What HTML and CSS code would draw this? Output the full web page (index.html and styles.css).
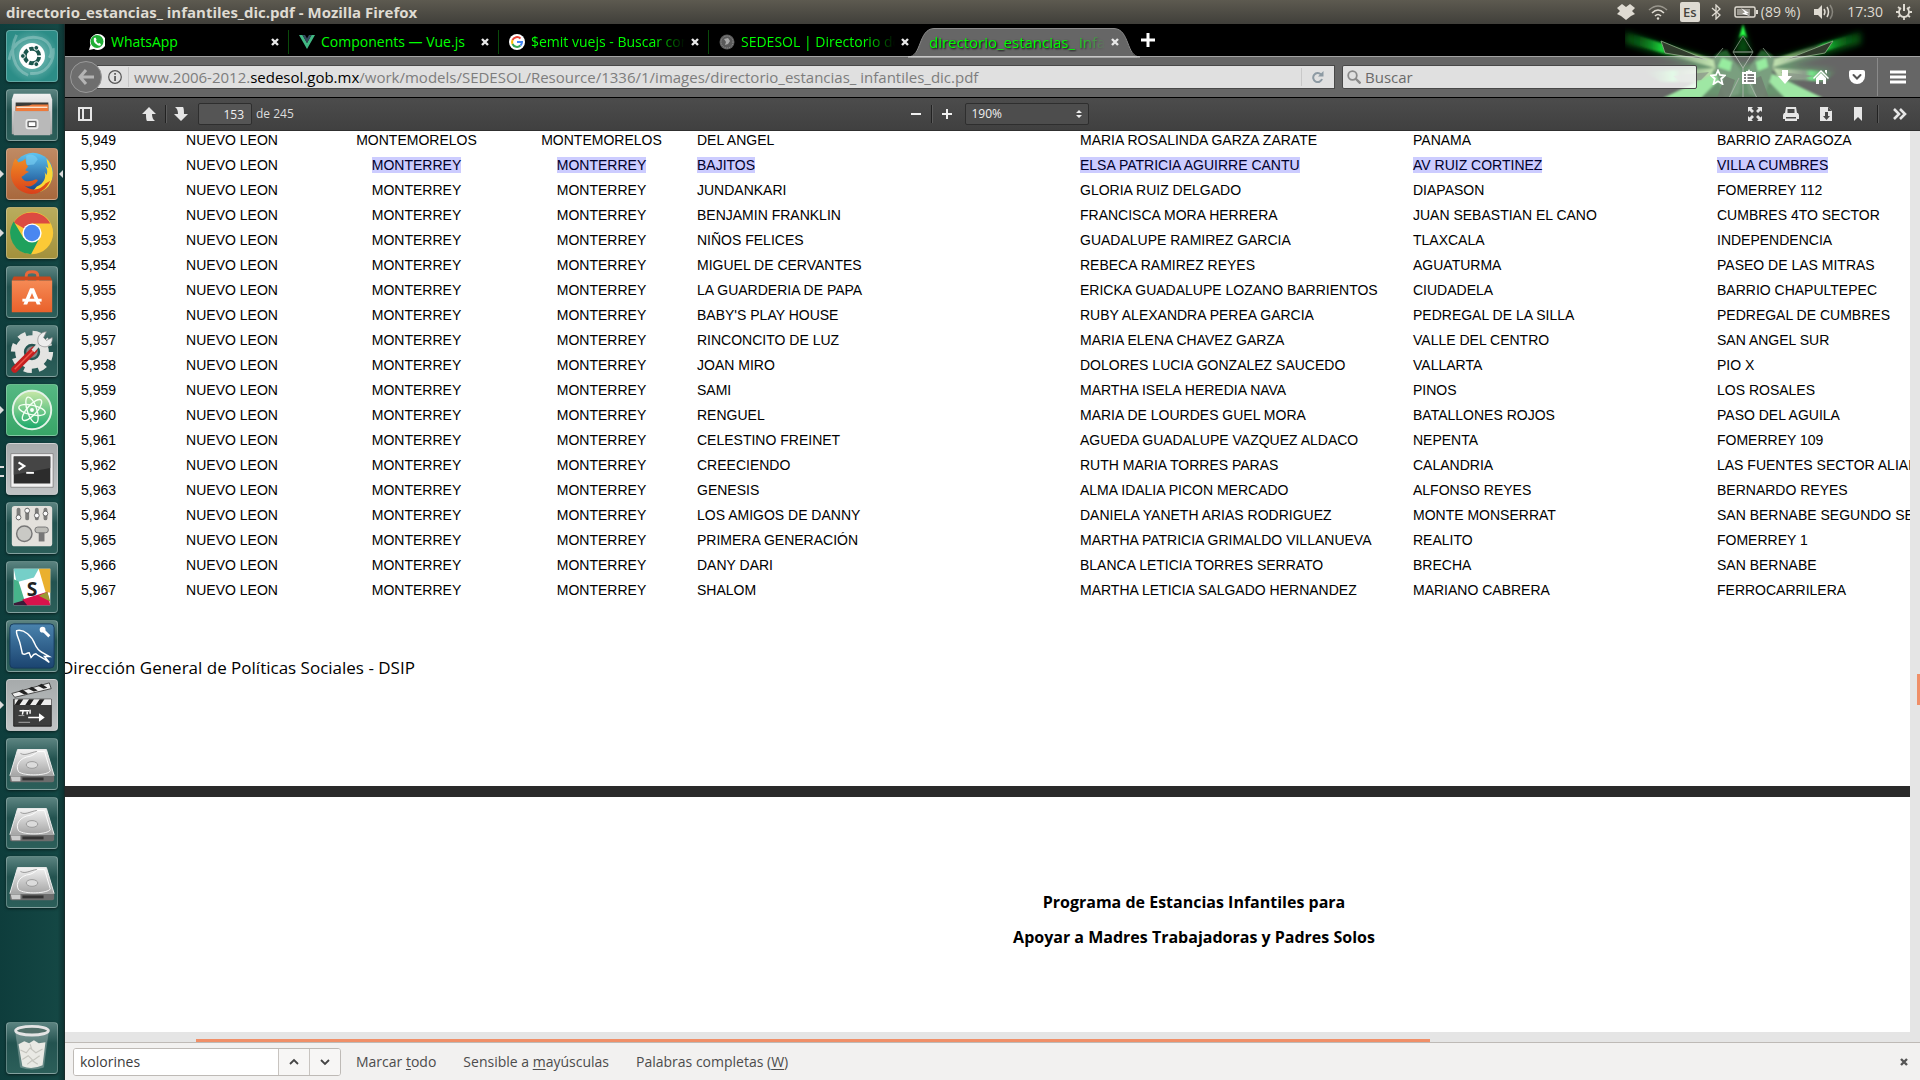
FILE: index.html
```html
<!DOCTYPE html>
<html lang="es">
<head>
<meta charset="utf-8">
<title>directorio_estancias_ infantiles_dic.pdf - Mozilla Firefox</title>
<link rel="stylesheet" href="styles.css">
</head>
<body>
<svg width="0" height="0" class="defs" aria-hidden="true">
  <defs>
    <linearGradient id="metal" x1="0" y1="0" x2="0" y2="1"><stop offset="0" stop-color="#f2f2f2"/><stop offset="1" stop-color="#a5a5a5"/></linearGradient>
    <linearGradient id="orange" x1="0" y1="0" x2="0" y2="1"><stop offset="0" stop-color="#f58a55"/><stop offset="1" stop-color="#e9612b"/></linearGradient>
    <linearGradient id="blue" x1="0" y1="0" x2="0" y2="1"><stop offset="0" stop-color="#5fc4f0"/><stop offset="1" stop-color="#123f86"/></linearGradient>
    <linearGradient id="fox" x1="0" y1="0" x2="0" y2="1"><stop offset="0" stop-color="#f08a24"/><stop offset="1" stop-color="#d9401a"/></linearGradient>
    <linearGradient id="sea" x1="0" y1="0" x2="0" y2="1"><stop offset="0" stop-color="#4a83ad"/><stop offset="1" stop-color="#1b4470"/></linearGradient>
    <linearGradient id="atomg" x1="0" y1="0" x2="0" y2="1"><stop offset="0" stop-color="#c9e8a8"/><stop offset="1" stop-color="#18a86a"/></linearGradient>
    <symbol id="drive" viewBox="0 0 52 52">
      <path d="M11 11h30l8 27H3z" fill="url(#metal)" stroke="#eee"/>
      <path d="M3 38h46v5q0 2-2 2H5q-2 0-2-2z" fill="#6d6d6d"/><path d="M4 39h10v5H5z" fill="#ccc"/><path d="M16 40h22v3H16z" fill="#333"/>
      <path d="M12 34c-4-7 2-15 12-16 4-1 6-4 8-5h7l6 20c-2 5-27 6-33 1z" fill="none" stroke="#fff" stroke-width="1" opacity=".9"/>
      <path d="M14 15c5 3 10-1 17-2" fill="none" stroke="#999"/>
      <ellipse cx="26" cy="27" rx="6" ry="3.500" fill="#dcdcdc" stroke="#999"/>
    </symbol>
    <symbol id="close" viewBox="0 0 10 10"><path d="M2 2l6 6M8 2l-6 6" stroke="currentColor" stroke-width="2.400"/></symbol>
  </defs>
</svg>

<header class="panel">
  <h1 class="panel-title">directorio_estancias_ infantiles_dic.pdf - Mozilla Firefox</h1>
  <div class="indicators">
    <svg width="18" height="18" viewBox="0 0 18 18"><path d="M5 1l4 3 4-3 5 4-3 3 3 3-4 2-5 4-5-4-4-2 3-3-3-3z" fill="#dfdbd2"/></svg>
    <svg class="wifi" width="20" height="18" viewBox="0 0 20 18" fill="none" stroke="#dfdbd2" stroke-width="1.600"><path d="M1 7q9-8 18 0" opacity=".5"/><path d="M4 10q6-6 12 0M7 13q3-3 6 0"/><circle cx="10" cy="15.500" r="1.200" fill="#dfdbd2" stroke="none"/></svg>
    <span class="kbd">Es</span>
    <svg class="bt" width="10" height="16" viewBox="0 0 10 16"><path d="M1 4l8 7-4 4V1l4 4-8 7" fill="none" stroke="#dfdbd2" stroke-width="1.300"/></svg>
    <svg class="bat" width="24" height="14" viewBox="0 0 24 14"><rect x="1" y="2" width="20" height="10" rx="1.500" fill="none" stroke="#dfdbd2" stroke-width="1.500"/><path d="M3 4h13v6H3z" fill="#99968e"/><path d="M22 5h2v4h-2z" fill="#dfdbd2"/><path d="M7 3l8 5-3 .5 5 3-9-3 3-1z" fill="#fff"/></svg>
    <span class="bat-text">(89 %)</span>
    <svg class="vol" width="20" height="16" viewBox="0 0 20 16"><path d="M0 5h4l4-4v14l-4-4H0z" fill="#dfdbd2"/><g fill="none" stroke="#dfdbd2" stroke-width="1.500"><path d="M10 5q2 3 0 6M13 3q3 5 0 10"/><path d="M16 1q5 7 0 14" opacity=".4"/></g></svg>
    <time class="clock">17:30</time>
    <svg width="16" height="16" viewBox="0 0 16 16" fill="none" stroke="#dfdbd2"><path d="M5 4a5 5 0 1 0 6 0" stroke-width="1.800"/><path d="M8 0v7" stroke-width="2"/><path d="M8 13v3M0 8h3M13 8h3M2 13l2-1.500M14 13l-2-1.500M2 3l2 1.500M14 3l-2 1.500" stroke-width="1.800"/></svg>
  </div>
</header>

<div class="desktop">
<nav class="launcher" aria-label="Lanzador">
  <a href="#" class="tile dash" aria-label="Inicio"><svg viewBox="0 0 52 52"><path d="M2 30C6 8 24 4 36 8c10 4 12 14 8 20M48 18c2 14-8 28-24 26M10 4C2 20 6 40 22 46" fill="none" stroke="#fff" stroke-width="3" opacity=".25"/><circle cx="26" cy="26" r="13.500" fill="#fff"/><circle cx="26" cy="26" r="7.500" fill="none" stroke="#1b554c" stroke-width="4" stroke-dasharray="13.700 2" stroke-dashoffset="-1"/><g fill="#1b554c" stroke="#fff"><circle cx="16.500" cy="26" r="2.500"/><circle cx="30.500" cy="17.500" r="2.500"/><circle cx="30.500" cy="34.500" r="2.500"/></g></svg></a>
  <a href="#" class="tile" aria-label="Archivos"><svg viewBox="0 0 52 52"><path d="M7 4h38l2 6v36H5V10z" fill="url(#metal)"/><path d="M9 13h34v9H9z" fill="#3a3a38"/><path d="M9 17l14-1 3-1h17v7H9z" fill="#ee7a3b"/><path d="M10 18h32" stroke="#fbe3cd" stroke-width="1.500"/><path d="M7 22h38v25H7z" fill="#b9b9b9"/><rect x="20" y="31" width="12" height="9" rx="2" fill="#c9c9c9" stroke="#eee" stroke-width="1.500"/><path d="M22 33h8v5h-8z" fill="#fff" stroke="#444"/></svg></a>
  <a href="#" class="tile firefox run focus" aria-label="Firefox"><svg viewBox="0 0 52 52"><circle cx="27" cy="25" r="21" fill="url(#blue)"/><path d="M20 7c6-3 10 0 12 4l-4 5-8 1z" fill="#7cd0f4" opacity=".6"/><path d="M41 10c8 8 9 21 2 29-6 6-12 7-18 7l6-7c8-3 10-10 8-15l2 3c2-4 0-7-1-9l3 2z" fill="#fbd735"/><path d="M6 17c0-3 2-6 3-7l3 4c2-1 5-1 7-4 1 3 0 6 3 8l-3 4 4 2c-4 1-4 3-8 5 2 5 7 5 11 4 4-1 5-2 6 0-4 6-10 7-14 5 8 7 18 4 22-2l5-3C40 44 30 49 20 46 6 42 1 28 6 17z" fill="url(#fox)"/></svg></a>
  <a href="#" class="tile chrome run" aria-label="Chrome"><svg viewBox="0 0 52 52"><circle cx="26" cy="26" r="22" fill="#fcc936"/><path d="M26 26L7 15A22 22 0 0 1 45 16H26z" fill="#dc4b41"/><path d="M26 26l8 5-9 17A22 22 0 0 1 7 14l10 17z" fill="#1fa15d"/><circle cx="26" cy="26" r="10" fill="#fff"/><circle cx="26" cy="26" r="8.500" fill="#4a87f0"/></svg></a>
  <a href="#" class="tile" aria-label="Software"><svg viewBox="0 0 52 52"><path d="M20 17V9q0-4 6-4t6 4v8" fill="none" stroke="#e8683a" stroke-width="3"/><path d="M7 10h38l2 4H5z" fill="#c9481d"/><path d="M5 14h42v33H5z" fill="url(#orange)"/><path d="M17 39l7-17h4l7 17h-4l-5-12-5 12z" fill="#fff"/><path d="M16 33h20v3H16z" fill="#fff"/></svg></a>
  <a href="#" class="tile" aria-label="Configuración"><svg viewBox="0 0 52 52"><circle cx="26" cy="27" r="19" fill="none" stroke="#e4e4e2" stroke-width="6" stroke-dasharray="8 6.920"/><circle cx="26" cy="27" r="13" fill="none" stroke="#e4e4e2" stroke-width="9"/><circle cx="26" cy="27" r="6" fill="#888"/><path d="M8 45l20-20" stroke="#c42020" stroke-width="7" stroke-linecap="round"/><path d="M8 45l20-20" stroke="#ee5a4d" stroke-width="1.500"/><path d="M27 26l7-8" stroke="#ddd" stroke-width="4"/><path d="M33 19c-3-6 1-13 8-13l-3 6 3 3 6-3c1 8-7 13-14 7z" fill="#ededed" stroke="#888" stroke-width=".7"/></svg></a>
  <a href="#" class="tile atom run" aria-label="Atom"><svg viewBox="0 0 52 52"><circle cx="26" cy="26" r="20" fill="url(#atomg)" stroke="#e4f3e8" stroke-width="2"/><g fill="none" stroke="#f4fff4" stroke-width="1.400"><ellipse cx="26" cy="26" rx="14" ry="5" transform="rotate(12 26 26)"/><ellipse cx="26" cy="26" rx="14" ry="5" transform="rotate(72 26 26)"/><ellipse cx="26" cy="26" rx="14" ry="5" transform="rotate(132 26 26)"/></g><circle cx="26" cy="26" r="2" fill="#fff"/></svg></a>
  <a href="#" class="tile term run two" aria-label="Terminal"><svg viewBox="0 0 52 52"><path d="M4 10h44v35H4z" fill="#f1f1f1" stroke="#888"/><path d="M7 13h38v28H7z" fill="#2c2c2c"/><path d="M7 13h38v12L7 32z" fill="#454545"/><path d="M12 19l6 4-6 4" fill="none" stroke="#fff" stroke-width="2.200"/><path d="M20 30h8" stroke="#fff" stroke-width="2"/></svg></a>
  <a href="#" class="tile" aria-label="Ajustes"><svg viewBox="0 0 52 52"><rect x="5" y="3" width="42" height="42" rx="3" fill="#e3e1dc"/><g stroke="#7c7c7a" stroke-width="4" stroke-linecap="round"><path d="M12 7v9M21 7v9M31 7v9M40 7v9"/></g><g fill="#fafafa" stroke="#555" stroke-width=".8"><circle cx="12" cy="15" r="2.500"/><circle cx="21" cy="8" r="2.500"/><circle cx="31" cy="13" r="2.500"/><circle cx="40" cy="11" r="2.500"/></g><circle cx="18" cy="32" r="8" fill="#c9c9c5" stroke="#777" stroke-width="1.500"/><path d="M33 30h6v10h-6z" fill="#777"/><rect x="29" y="25" width="14" height="6" rx="3" fill="#bdbdb8" stroke="#777"/></svg></a>
  <a href="#" class="tile" aria-label="Slack"><svg viewBox="0 0 52 52"><path d="M7 7h38v38H7z" fill="#fff"/><path d="M7 7h26l-5 9-18 5z" fill="#75cfc8"/><path d="M7 18l5 2 7 22-12 3z" fill="#47b48b"/><path d="M33 7h12v25l-5-1z" fill="#eab02e"/><path d="M16 39l26-8 3 14H18z" fill="#d8134c"/><path d="M33 35l9-4 3 10z" fill="#9c9a32"/><path d="M7 43l10-3 4 5H7z" fill="#3d1a39"/><text x="26" y="35" text-anchor="middle" class="slack-s">S</text></svg></a>
  <a href="#" class="tile" aria-label="MySQL Workbench"><svg viewBox="0 0 52 52"><rect x="3" y="3" width="46" height="46" rx="4" fill="url(#sea)" stroke="#173a5c"/><path d="M10 10c8-2 16 6 19 14 2 5 4 7 8 9l7 4-5 0 5 6c-6-5-11-6-14-9-3 0-4 3-5 4l-2-5c-3 0-4 3-7 1l-2-9c-1-6-5-11-4-15z" fill="none" stroke="#fff" stroke-width="1.500"/><path d="M36 8l8 8" stroke="#fff" stroke-width="3"/><circle cx="37" cy="9" r="3" fill="#fff"/></svg></a>
  <a href="#" class="tile film run" aria-label="Editor de vídeo"><svg viewBox="0 0 52 52"><path d="M7 20h39v28H7z" fill="#3c3d3d" stroke="#222"/><path d="M5 14L44 3l2 6L8 18z" fill="#eee" stroke="#444"/><path d="M12 12l6 3 4-1-6-4zM22 9l6 3 4-1-6-4zM32 6l6 3 4-1-6-4z" fill="#222"/><path d="M8 20h38v6H8z" fill="#eee"/><path d="M12 20h5l-4 6H8zM23 20h5l-4 6h-5zM34 20h5l-4 6h-5z" fill="#222"/><path d="M13 32h10M17 31l-1 5M21 33v3M24 31v4M22 39h12M34 36l4 3-4 3z" stroke="#fff" stroke-width="1.500" fill="#fff"/><path d="M12 44h12M12 37h6" stroke="#aaa"/></svg></a>
  <a href="#" class="tile" aria-label="Disco 1"><svg><use href="#drive"/></svg></a>
  <a href="#" class="tile" aria-label="Disco 2"><svg><use href="#drive"/></svg></a>
  <a href="#" class="tile" aria-label="Disco 3"><svg><use href="#drive"/></svg></a>
  <a href="#" class="tile trash" aria-label="Papelera"><svg viewBox="0 0 52 52"><path d="M9 9l5 37q12 4 24 0l5-37z" fill="#cfd9d6" opacity=".35" stroke="#fff" stroke-width=".5"/><path d="M12 22l6-3 5 2 5-3 5 3 7-1-3 24q-11 5-21 1z" fill="#e9e9e4"/><path d="M14 28l6 3 4-5 6 5 7-4M16 38l6-4 5 5 7-5M24 22l2 6M21 43l5-4 6 4" fill="none" stroke="#c5c5be" stroke-width="1.200"/><ellipse cx="26" cy="8" rx="17" ry="4.500" fill="#52706a" stroke="#e4e4e4" stroke-width="3"/></svg></a>
</nav>

<main class="browser">
<div class="chrome-top">
  <svg class="persona" viewBox="0 0 250 74" aria-hidden="true">
    <defs>
      <filter id="soft"><feGaussianBlur stdDeviation="3"/></filter>
      <filter id="soft1"><feGaussianBlur stdDeviation="1"/></filter>
      <linearGradient id="wl" x1="0" x2="1"><stop offset="0" stop-color="#0a4d10" stop-opacity="0"/><stop offset=".4" stop-color="#1bd83c"/><stop offset=".5" stop-color="#2b5a2b"/><stop offset="1" stop-color="#9fd880"/></linearGradient>
      <linearGradient id="wr" x1="1" x2="0"><stop offset="0" stop-color="#0a4d10" stop-opacity="0"/><stop offset=".4" stop-color="#1bd83c"/><stop offset=".5" stop-color="#3e5a3e"/><stop offset="1" stop-color="#9fd880"/></linearGradient>
    </defs>
    <g filter="url(#soft)" fill="#0f9c22" opacity=".5"><path d="M0 8l90 28-10 8L0 20zM236 8l-90 28 10 8 80-24zM60 74l40-34h40l45 34zM20 46l80-6v20zM212 46l-70-6v20zM118 0l-8 30h16z"/></g>
    <g filter="url(#soft1)">
      <path d="M2 8l88 28v8L6 20z" fill="url(#wl)"/><path d="M234 8l-88 28v8l84-26z" fill="url(#wr)"/>
      <path d="M20 48l70-4-8 14-46 0z" fill="url(#wl)"/><path d="M212 48l-64-4 6 10 46 4z" fill="url(#wr)"/>
      <path d="M38 74l50-24 8 4-20 20zM198 74l-50-24-8 4 20 20z" fill="#5fd868"/>
      <path d="M118 0l4 14-4-3-4 3z" fill="#2cff48"/>
      <path d="M88 34q6-8 14-8l16 24-4 20-14 4-8-20zM150 34q-8-8-14-8l-16 24 4 20 14 4 8-20z" fill="#245f2c"/>
      <path d="M97 34l10 4-2 9-12-4zM141 34l-10 4 2 9 10-4z" fill="#52e060"/>
    </g>
    <path d="M92 74l8-22 10 4-6 18zM144 74l-8-22-10 4 6 18z" fill="#10240f" opacity=".8"/>
    <path d="M118 12l10 16h-20zM108 28l10 16 10-16zM118 44v30M104 74l10-20M132 74l-10-20M90 34l8-10M146 34l-8-10" fill="none" stroke="#6f7f6f" stroke-width="1"/>
    <path d="M36 17l46 19-42-7zM208 17l-48 19 40-7z" fill="#303c2c" stroke="#8fae88" stroke-width=".8"/>
    <path d="M48 52l36-4-8 8-20 2zM190 52l-34-4 8 8z" fill="#3c503a" opacity=".7"/>
  </svg>

  <div class="tabs" role="tablist">
    <div class="tab"><svg width="16" height="18" viewBox="0 0 16 18"><path d="M0 17l1.500-5A8 8 0 1 1 5 16z" fill="#fff"/><circle cx="8" cy="8.500" r="6.500" fill="#1fae35"/><path d="M5 5q-1 4 2 6 3 3 5 1l-1-2-2 .5L7 8l.5-1.500-1-2z" fill="#fff"/></svg><button class="tab-title">WhatsApp</button><button class="x" aria-label="Cerrar"><svg><use href="#close"/></svg></button></div>
    <div class="tab"><svg width="16" height="16" viewBox="0 0 16 16"><path d="M0 1h3.500L8 9l4.500-8H16L8 15z" fill="#41b883"/><path d="M3.500 1H6l2 3.500L10 1h2.500L8 9z" fill="#35495e"/></svg><button class="tab-title">Components — Vue.js</button><button class="x" aria-label="Cerrar"><svg><use href="#close"/></svg></button></div>
    <div class="tab"><svg width="16" height="16" viewBox="0 0 16 16"><circle cx="8" cy="8" r="8" fill="#fff"/><g fill="none" stroke-width="2"><path d="M11.500 4.500A5 5 0 0 0 3.500 6" stroke="#ea4335"/><path d="M3.500 6a5 5 0 0 0 0 4" stroke="#fbbc05"/><path d="M3.500 10a5 5 0 0 0 8 1.500" stroke="#34a853"/><path d="M11.500 11.500Q13 10 13 8H8" stroke="#4285f4"/></g></svg><button class="tab-title fade">$emit vuejs - Buscar con Google</button><button class="x" aria-label="Cerrar"><svg><use href="#close"/></svg></button></div>
    <div class="tab"><svg width="16" height="16" viewBox="0 0 16 16"><circle cx="8" cy="8" r="7.500" fill="#5a5a5a"/><circle cx="8" cy="8" r="6" fill="none" stroke="#999" stroke-dasharray="1 1"/><path d="M5 5l4-1 2 3-2 3-3 1 1-3z" fill="#a8a8a8"/></svg><button class="tab-title fade">SEDESOL | Directorio de Estancias</button><button class="x" aria-label="Cerrar"><svg><use href="#close"/></svg></button></div>
    <div class="tab active"><svg class="tab-shape" width="232" height="30" viewBox="0 0 232 30"><path d="M0 29.500C14 29.500 10 1 26 .5h180c16 .5 12 29 26 29V30H0z" fill="#666"/><path d="M0 29C14 29 10 1 26 .5h180c16 .5 12 28.500 26 28.500" fill="none" stroke="#8c8c8c"/></svg><button class="tab-title fade">directorio_estancias_ infantiles_dic.pdf</button><button class="x" aria-label="Cerrar"><svg><use href="#close"/></svg></button></div>
    <button class="new-tab" aria-label="Nueva pestaña"><svg width="14" height="14" viewBox="0 0 14 14"><path d="M7 0v14M0 7h14" stroke="#fff" stroke-width="3"/></svg></button>
  </div>

  <div class="navbar">
    <button class="back" aria-label="Atrás"><svg width="16" height="16" viewBox="0 0 16 16"><path d="M8 1L2 8l6 7M2 8h14" fill="none" stroke="#b4b4b4" stroke-width="3"/></svg></button>
    <div class="urlbar">
      <svg class="info" width="14" height="14" viewBox="0 0 14 14"><circle cx="7" cy="7" r="6.300" fill="none" stroke="#555" stroke-width="1.200"/><path d="M6.200 3h1.700v1.700H6.200zM6.200 6h1.700v5H6.200z" fill="#555"/></svg>
      <div class="url" role="textbox" aria-label="Dirección">www.2006-2012.<b>sedesol.gob.mx</b>/work/models/SEDESOL/Resource/1336/1/images/directorio_estancias_ infantiles_dic.pdf</div>
      <button class="reload" aria-label="Recargar"><svg width="12" height="12" viewBox="0 0 12 12"><path d="M9 3.500A4.500 4.500 0 1 0 10 8" fill="none" stroke="#8d9aa3" stroke-width="2"/><path d="M11.500 0v5.500H6z" fill="#8d9aa3"/></svg></button>
    </div>
    <label class="search"><svg width="14" height="14" viewBox="0 0 14 14" fill="none" stroke="#8a8a8a"><circle cx="5.500" cy="5.500" r="4.300" stroke-width="1.800"/><path d="M8.500 8.500l5 5" stroke-width="2.400"/></svg><input type="text" placeholder="Buscar" aria-label="Buscar"></label>
    <div class="actions">
      <button aria-label="Marcador"><svg width="16" height="16" viewBox="0 0 16 16"><path d="M8 1.500l2 4.500 5 .5-3.800 3.200L12.500 15 8 12.200 3.500 15l1.300-5.300L1 6.500 6 6z" fill="none" stroke="#fff" stroke-width="1.800"/></svg></button>
      <button aria-label="Marcadores"><svg width="16" height="16" viewBox="0 0 16 16"><path d="M5 2h2l1-2 1 2h2v1h4v12H1V3h4z" fill="#fff"/><path d="M3 6h2M6.500 6H13M3 9h2M6.500 9H13M3 12h2M6.500 12H13" stroke="#555" stroke-width="1.400"/></svg></button>
      <button aria-label="Descargas"><svg width="16" height="16" viewBox="0 0 16 16"><path d="M5 1h6v6h4l-7 8-7-8h4z" fill="#fff"/></svg></button>
      <button aria-label="Inicio"><svg width="16" height="16" viewBox="0 0 16 16"><path d="M0 9l8-8 8 8-1 1-7-7-7 7zM12 1h2v4l-2-2z" fill="#fff"/><path d="M3 9l5-5 5 5v6H10v-4H6v4H3z" fill="#fff"/></svg></button>
      <button aria-label="Pocket"><svg width="16" height="16" viewBox="0 0 16 16"><path d="M0 3q0-2 2-2h12q2 0 2 2v4a8 8 0 0 1-16 0z" fill="#fff"/><path d="M4.500 6L8 9.500 11.500 6" fill="none" stroke="#555" stroke-width="2" stroke-linecap="round"/></svg></button>
      <span class="nav-sep"></span>
      <button aria-label="Menú"><svg width="16" height="16" viewBox="0 0 16 16"><path d="M0 3h16M0 8h16M0 13h16" stroke="#fff" stroke-width="3"/></svg></button>
    </div>
  </div>
</div>

<div class="pdfbar">
  <div class="group left">
    <button class="side" aria-label="Panel lateral"><svg width="14" height="14" viewBox="0 0 14 14"><path d="M1 1h12v12H1zM5 1v12" fill="none" stroke="#e6e6e6" stroke-width="2"/></svg></button>
    <button aria-label="Página anterior"><svg width="16" height="16" viewBox="0 0 16 16"><path d="M7 1l7 7h-4q0 5 3 7H5q-1-1-1-7H0z" fill="#e6e6e6"/></svg></button>
    <span class="sep"></span>
    <button aria-label="Página siguiente"><svg width="16" height="16" viewBox="0 0 16 16"><path d="M8 15L1 8h4q0-5-3-7h8q1 1 1 7h4z" fill="#e6e6e6"/></svg></button>
    <input class="page-no" type="text" value="153" aria-label="Página"><span>de 245</span>
  </div>
  <div class="group mid">
    <button aria-label="Reducir"><svg width="12" height="12" viewBox="0 0 12 12"><path d="M1 6h10" stroke="#f0f0f0" stroke-width="2"/></svg></button>
    <span class="sep"></span>
    <button aria-label="Aumentar"><svg width="12" height="12" viewBox="0 0 12 12"><path d="M1 6h10M6 1v10" stroke="#f0f0f0" stroke-width="2"/></svg></button>
    <span class="zoom"><select aria-label="Zoom"><option>190%</option></select><svg width="6" height="8" viewBox="0 0 6 8"><path d="M3 0l3 3H0zM3 8l3-3H0z" fill="#eee"/></svg></span>
  </div>
  <div class="group right">
    <button aria-label="Presentación"><svg width="16" height="16" viewBox="0 0 16 16" fill="#e6e6e6"><path d="M1 1h5L4.500 2.500 7 5 5 7 2.500 4.500 1 6zM15 1v5l-1.500-1.500L11 7 9 5l2.500-2.500L10 1zM1 15v-5l1.500 1.500L5 9l2 2-2.500 2.500L6 15zM15 15h-5l1.500-1.500L9 11l2-2 2.500 2.500L15 10z"/></svg></button>
    <button aria-label="Imprimir"><svg width="16" height="16" viewBox="0 0 16 16"><path d="M3 1h10l1 6h1l1 2v4h-2v2H2v-2H0V9l1-2h1z" fill="#e6e6e6"/><path d="M4.500 3h7v4h-7zM3 11h10v1.500H3z" fill="#484848"/></svg></button>
    <button aria-label="Descargar"><svg width="14" height="16" viewBox="0 0 14 16"><path d="M1 1h8l4 4v10H1z" fill="#e6e6e6"/><path d="M9 1v4h4M6 6h3v4h2l-3.500 4L4 10h2z" fill="#484848"/></svg></button>
    <button aria-label="Vista actual"><svg width="10" height="16" viewBox="0 0 10 16"><path d="M1 1h8v14l-4-4-4 4z" fill="#e6e6e6"/></svg></button>
    <span class="sep"></span>
    <button aria-label="Herramientas"><svg width="16" height="16" viewBox="0 0 16 16"><path d="M2 3l5 5-5 5M8 3l5 5-5 5" fill="none" stroke="#e6e6e6" stroke-width="2.600"/></svg></button>
  </div>
</div>

<div class="viewer">
  <div class="pages">
    <section class="page first">
      <table>
        <colgroup><col class="c1"><col class="c2"><col class="c3"><col class="c4"><col class="c5"><col class="c6"><col class="c7"><col></colgroup>
        <tbody>
        <tr><td>5,949</td><td>NUEVO LEON</td><td>MONTEMORELOS</td><td>MONTEMORELOS</td><td>DEL ANGEL</td><td>MARIA ROSALINDA GARZA ZARATE</td><td>PANAMA</td><td>BARRIO ZARAGOZA</td></tr>
        <tr><td>5,950</td><td>NUEVO LEON</td><td><mark>MONTERREY</mark></td><td><mark>MONTERREY</mark></td><td><mark>BAJITOS</mark></td><td><mark>ELSA PATRICIA AGUIRRE CANTU</mark></td><td><mark>AV RUIZ CORTINEZ</mark></td><td><mark>VILLA CUMBRES</mark></td></tr>
        <tr><td>5,951</td><td>NUEVO LEON</td><td>MONTERREY</td><td>MONTERREY</td><td>JUNDANKARI</td><td>GLORIA RUIZ DELGADO</td><td>DIAPASON</td><td>FOMERREY 112</td></tr>
        <tr><td>5,952</td><td>NUEVO LEON</td><td>MONTERREY</td><td>MONTERREY</td><td>BENJAMIN FRANKLIN</td><td>FRANCISCA MORA HERRERA</td><td>JUAN SEBASTIAN EL CANO</td><td>CUMBRES 4TO SECTOR</td></tr>
        <tr><td>5,953</td><td>NUEVO LEON</td><td>MONTERREY</td><td>MONTERREY</td><td>NIÑOS FELICES</td><td>GUADALUPE RAMIREZ GARCIA</td><td>TLAXCALA</td><td>INDEPENDENCIA</td></tr>
        <tr><td>5,954</td><td>NUEVO LEON</td><td>MONTERREY</td><td>MONTERREY</td><td>MIGUEL DE CERVANTES</td><td>REBECA RAMIREZ REYES</td><td>AGUATURMA</td><td>PASEO DE LAS MITRAS</td></tr>
        <tr><td>5,955</td><td>NUEVO LEON</td><td>MONTERREY</td><td>MONTERREY</td><td>LA GUARDERIA DE PAPA</td><td>ERICKA GUADALUPE LOZANO BARRIENTOS</td><td>CIUDADELA</td><td>BARRIO CHAPULTEPEC</td></tr>
        <tr><td>5,956</td><td>NUEVO LEON</td><td>MONTERREY</td><td>MONTERREY</td><td>BABY'S PLAY HOUSE</td><td>RUBY ALEXANDRA PEREA GARCIA</td><td>PEDREGAL DE LA SILLA</td><td>PEDREGAL DE CUMBRES</td></tr>
        <tr><td>5,957</td><td>NUEVO LEON</td><td>MONTERREY</td><td>MONTERREY</td><td>RINCONCITO DE LUZ</td><td>MARIA ELENA CHAVEZ GARZA</td><td>VALLE DEL CENTRO</td><td>SAN ANGEL SUR</td></tr>
        <tr><td>5,958</td><td>NUEVO LEON</td><td>MONTERREY</td><td>MONTERREY</td><td>JOAN MIRO</td><td>DOLORES LUCIA GONZALEZ SAUCEDO</td><td>VALLARTA</td><td>PIO X</td></tr>
        <tr><td>5,959</td><td>NUEVO LEON</td><td>MONTERREY</td><td>MONTERREY</td><td>SAMI</td><td>MARTHA ISELA HEREDIA NAVA</td><td>PINOS</td><td>LOS ROSALES</td></tr>
        <tr><td>5,960</td><td>NUEVO LEON</td><td>MONTERREY</td><td>MONTERREY</td><td>RENGUEL</td><td>MARIA DE LOURDES GUEL MORA</td><td>BATALLONES ROJOS</td><td>PASO DEL AGUILA</td></tr>
        <tr><td>5,961</td><td>NUEVO LEON</td><td>MONTERREY</td><td>MONTERREY</td><td>CELESTINO FREINET</td><td>AGUEDA GUADALUPE VAZQUEZ ALDACO</td><td>NEPENTA</td><td>FOMERREY 109</td></tr>
        <tr><td>5,962</td><td>NUEVO LEON</td><td>MONTERREY</td><td>MONTERREY</td><td>CREECIENDO</td><td>RUTH MARIA TORRES PARAS</td><td>CALANDRIA</td><td>LAS FUENTES SECTOR ALIANZA</td></tr>
        <tr><td>5,963</td><td>NUEVO LEON</td><td>MONTERREY</td><td>MONTERREY</td><td>GENESIS</td><td>ALMA IDALIA PICON MERCADO</td><td>ALFONSO REYES</td><td>BERNARDO REYES</td></tr>
        <tr><td>5,964</td><td>NUEVO LEON</td><td>MONTERREY</td><td>MONTERREY</td><td>LOS AMIGOS DE DANNY</td><td>DANIELA YANETH ARIAS RODRIGUEZ</td><td>MONTE MONSERRAT</td><td>SAN BERNABE SEGUNDO SECTOR</td></tr>
        <tr><td>5,965</td><td>NUEVO LEON</td><td>MONTERREY</td><td>MONTERREY</td><td>PRIMERA GENERACIÓN</td><td>MARTHA PATRICIA GRIMALDO VILLANUEVA</td><td>REALITO</td><td>FOMERREY 1</td></tr>
        <tr><td>5,966</td><td>NUEVO LEON</td><td>MONTERREY</td><td>MONTERREY</td><td>DANY DARI</td><td>BLANCA LETICIA TORRES SERRATO</td><td>BRECHA</td><td>SAN BERNABE</td></tr>
        <tr><td>5,967</td><td>NUEVO LEON</td><td>MONTERREY</td><td>MONTERREY</td><td>SHALOM</td><td>MARTHA LETICIA SALGADO HERNANDEZ</td><td>MARIANO CABRERA</td><td>FERROCARRILERA</td></tr>
        </tbody>
      </table>
      <p class="page-foot">Dirección General de Políticas Sociales - DSIP</p>
    </section>
    <section class="page second">
      <h2>Programa de Estancias Infantiles para<br>Apoyar a Madres Trabajadoras y Padres Solos</h2>
    </section>
  </div>
  <div class="vscroll"><span></span></div>
  <div class="hscroll"><span></span></div>
</div>

<div class="findbar">
  <div class="find-group">
    <input type="text" value="kolorines" aria-label="Buscar en la página">
    <button aria-label="Anterior"><svg width="10" height="8" viewBox="0 0 10 8"><path d="M1 6l4-4 4 4" fill="none" stroke="#444" stroke-width="1.800"/></svg></button>
    <button aria-label="Siguiente"><svg width="10" height="8" viewBox="0 0 10 8"><path d="M1 2l4 4 4-4" fill="none" stroke="#444" stroke-width="1.800"/></svg></button>
  </div>
  <button class="opt">Marcar <u>t</u>odo</button>
  <button class="opt">Sensible a <u>m</u>ayúsculas</button>
  <button class="opt">Palabras completas (<u>W</u>)</button>
  <button class="x find-close" aria-label="Cerrar"><svg><use href="#close"/></svg></button>
</div>
</main>
</div>
</body>
</html>
```
FILE: styles.css
```css
* { box-sizing: border-box; }
body { margin: 0; height: 100vh; display: flex; flex-direction: column; overflow: hidden; font-family: "Open Sans", "Noto Sans", sans-serif; font-size: 15px; line-height: 20px; }
button { border: 0; padding: 0; background: none; font: inherit; color: inherit; display: flex; align-items: center; justify-content: center; }
input, select { font: inherit; color: inherit; }
svg { display: block; flex: none; }
.defs { position: absolute; }

/* Top panel */
.panel { height: 24px; flex: none; display: flex; align-items: center; justify-content: space-between; padding: 0 8px 0 6px; background: linear-gradient(#5d5a50, #403f3a); color: #dfdbd2; }
.panel-title { margin: 0; font-size: 15px; font-weight: 700; }
.indicators { display: flex; align-items: center; font-size: 14px; }
.wifi { margin-left: 13px; }
.kbd { margin-left: 12px; width: 20px; height: 20px; border-radius: 2px; background: #dfdbd2; color: #45443e; font-size: 13px; font-weight: 600; text-align: center; }
.bt { margin-left: 11px; }
.bat { margin-left: 13px; }
.bat-text { margin-left: 3px; }
.vol { margin-left: 14px; }
.clock { margin: 0 13px; }

/* Launcher */
.desktop { flex: 1; min-height: 0; display: flex; }
.launcher { width: 65px; flex: none; display: flex; flex-direction: column; gap: 7px; padding: 6px 0 6px 6px; background: linear-gradient(90deg, #0e3d3c, #144744 90%, #0d3231); border-right: 1px solid #1a2b2a; }
.tile { position: relative; width: 52px; height: 52px; flex: none; border-radius: 4px; border: 1px solid #ffffff40; background: linear-gradient(#5b8380, #235350 40%, #2c5f5a); box-shadow: 0 1px 3px #0008; }
.tile svg { width: 50px; height: 50px; }
.dash { background: radial-gradient(#8ecac4, #2c8d87 75%); }
.firefox { background: linear-gradient(#c08a63, #a8683d); }
.chrome { background: linear-gradient(#b9ac5d, #a3913c); }
.atom { background: linear-gradient(#56b883, #38a567); }
.term, .film { background: linear-gradient(#a6aaab, #c0c3c4); }
.trash { margin-top: auto; }
.run::before, .focus::after { content: ""; position: absolute; top: 21px; border: 4px solid transparent; }
.run::before { left: -7px; border-left-color: #dcdcdc; border-right: 0; }
.focus::after { right: -6px; border-right-color: #dcdcdc; border-left: 0; }
.two::before { top: 22px; width: 4px; height: 7px; border: solid #dcdcdc; border-width: 2px 0; }
.slack-s { font: bold 20px "Open Sans", sans-serif; fill: #222; }

/* Browser chrome */
.browser { flex: 1; min-width: 0; display: flex; flex-direction: column; }
.chrome-top { position: relative; flex: none; background: #000; }
.persona { position: absolute; right: 45px; top: 0; width: 250px; height: 74px; }
.tabs { position: relative; height: 32px; display: flex; padding-left: 14px; color: #0f0; font-size: 14px; }
.tab { position: relative; width: 210px; height: 24px; margin-top: 6px; padding: 0 8px 0 10px; display: flex; align-items: center; border-right: 1px solid #0a4a0a; }
.tab:nth-child(4), .tab.active { border-right-color: transparent; }
.tab-title { position: relative; flex: 1; min-width: 0; margin: 0 5px 0 6px; white-space: nowrap; overflow: hidden; justify-content: flex-start; }
.fade { -webkit-mask-image: linear-gradient(90deg, #000 80%, transparent); mask-image: linear-gradient(90deg, #000 80%, transparent); }
.x { position: relative; color: #e8e8e8; }
.x svg { width: 10px; height: 10px; }
.active .tab-title { margin-left: 0; font-size: 15px; text-shadow: 1px 1px 2px #000; }
.tab-shape { position: absolute; left: -11px; top: -2px; }
.new-tab { margin-left: 12px; width: 14px; }
.navbar { position: relative; height: 42px; display: flex; align-items: center; padding: 0 14px 0 5px; background: #ffffff66; border-top: 1px solid #ffffff66; border-bottom: 1px solid #000; }
.back { position: relative; z-index: 1; width: 32px; height: 32px; flex: none; border-radius: 50%; background: #6e6e6e; border: 1px solid #999; }
.urlbar { flex: 1; min-width: 0; height: 24px; margin-left: -8px; padding-left: 14px; display: flex; align-items: center; background: #e0e0e0; border: 1px solid #484848; border-left: 0; }
.url { flex: 1; min-width: 0; height: 20px; margin-left: 6px; padding-left: 5px; border-left: 1px solid #c8c8c8; color: #7d7d7d; white-space: nowrap; overflow: hidden; }
.url b { color: #000; font-weight: 400; }
.reload { width: 33px; height: 18px; border-left: 1px solid #c8c8c8; }
.search { width: 355px; height: 24px; margin-left: 7px; padding-left: 4px; display: flex; align-items: center; gap: 4px; background: #fffc; border: 1px solid #484848; border-radius: 2px; }
.search input { flex: 1; min-width: 0; border: 0; padding: 0; height: 20px; background: none; outline: 0; }
.search input::placeholder { color: #6a6a6a; opacity: 1; }
.actions { display: flex; align-items: center; gap: 20px; margin-left: 13px; }
.actions button:nth-child(2) { margin-left: -5px; }
.actions button:nth-child(n+3) { width: 16px; }
.nav-sep { width: 1px; height: 38px; margin: 0 -8px; background: #8a8a8a; }

/* PDF toolbar */
.pdfbar { height: 33px; flex: none; display: grid; grid-template-columns: 1fr auto 1fr; align-items: center; padding: 0 12px 0 13px; background: linear-gradient(#4c4c4c, #404040); border-bottom: 1px solid #303030; color: #dcdcdc; font-size: 12px; }
.group { display: flex; align-items: center; }
.left { gap: 7px; }
.left .side { margin-right: 43px; }
.right { justify-content: flex-end; gap: 20px; }
.right .sep { margin: 0 -6px; }
.mid { gap: 9px; margin-left: 12px; }
.sep { width: 1px; height: 18px; background: #222; box-shadow: 1px 0 #5c5c5c; }
.page-no { width: 54px; height: 22px; padding: 0 7px; text-align: right; background: #555; border: 1px solid #2e2e2e; border-radius: 2px; color: #f0f0f0; margin-left: 2px; }
.page-no + span { margin-left: -3px; }
.zoom { position: relative; margin-left: 3px; }
.zoom select { display: block; width: 124px; height: 22px; padding: 0 6px; appearance: none; background: #4d4d4d; border: 1px solid #2e2e2e; border-radius: 2px; color: #f0f0f0; }
.zoom svg { position: absolute; right: 7px; top: 7px; }

/* Document */
.viewer { flex: 1; min-height: 0; display: grid; grid-template: 1fr 10px / 1fr 10px; background: #e5e5e5; }
.pages { overflow: hidden; min-width: 0; min-height: 0; display: flex; flex-direction: column; gap: 11px; background: #2a2a2a; }
.page { background: #fff; color: #000; }
.first { height: 655px; flex: none; }
table { width: 100%; margin-top: -3px; table-layout: fixed; border-collapse: collapse; font: 14px/25px "Liberation Sans", Arial, sans-serif; }
td { padding: 0 0 0 3px; height: 25px; white-space: nowrap; }
td:first-child { padding-left: 16px; }
td:nth-child(2), td:nth-child(3), td:nth-child(4) { text-align: center; padding: 0; }
mark { background: #ccccff; color: #00002a; }
.c1 { width: 75px; } .c2 { width: 184px; } .c3 { width: 185px; } .c4 { width: 185px; } .c5 { width: 383px; } .c6 { width: 333px; } .c7 { width: 304px; }
.page-foot { margin: 53px 0 0 -4px; font-size: 17px; line-height: 24px; }
.second { flex: 1; padding-top: 88px; }
.second h2 { margin: 0 0 0 413px; text-align: center; font-size: 16px; line-height: 35px; font-weight: 700; }
.vscroll { padding-top: 543px; }
.vscroll span { display: block; width: 3px; height: 31px; margin-left: auto; background: #f08f68; }
.hscroll { display: flex; align-items: flex-end; padding-left: 131px; }
.hscroll span { width: 72%; height: 3px; background: #f08f68; }

/* Find bar */
.findbar { height: 38px; flex: none; display: flex; align-items: center; padding: 0 11px 0 8px; background: #f2f1f0; border-top: 1px solid #bebab6; color: #4c4c4c; font-size: 14px; }
.find-group { display: flex; height: 28px; margin-right: 15px; border: 1px solid #bebab6; border-radius: 3px; overflow: hidden; background: #fff; }
.find-group input { width: 204px; border: 0; padding: 0 6px; outline: 0; color: #3c3c3c; }
.find-group button { width: 31px; border-left: 1px solid #c8c4c0; background: #f7f6f5; }
.opt { display: inline; margin-right: 27px; }
.opt u { text-underline-offset: 2px; }
.find-close { margin-left: auto; color: #555; }
```
